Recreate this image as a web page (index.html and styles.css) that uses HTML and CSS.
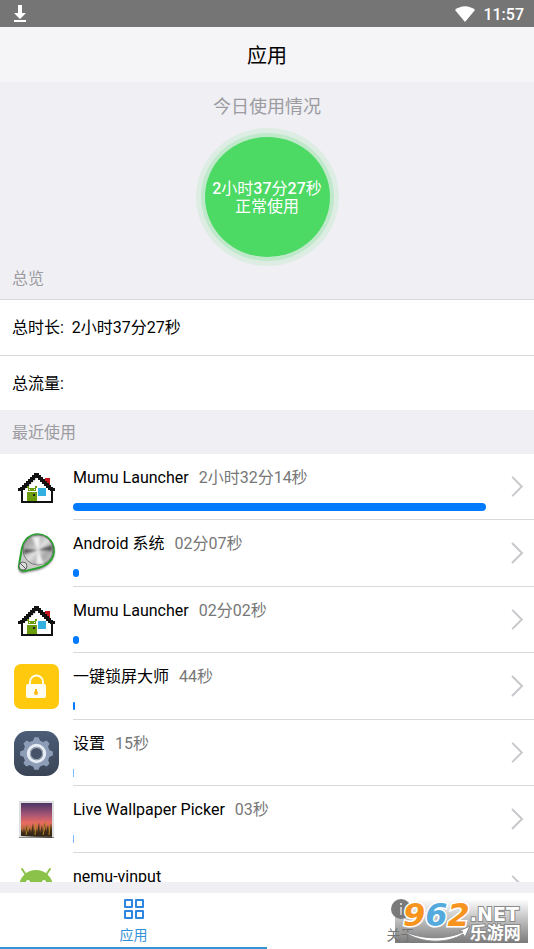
FILE: index.html
```html
<!DOCTYPE html>
<html lang="zh-CN">
<head>
    <meta charset="UTF-8">
    <meta name="viewport" content="width=device-width, initial-scale=1.0">
    <title>应用</title>
    <link rel="stylesheet" href="styles.css">
</head>
<body>
    <!-- shared icons -->
    <svg class="sprite" width="0" height="0" aria-hidden="true">
        <symbol id="chevron" viewBox="0 0 14 24">
            <path d="M2 2l10 10L2 22" fill="none" stroke="#c7c7cc" stroke-width="2"/>
        </symbol>
        <symbol id="house" viewBox="0 0 45 45">
            <path d="M31 13h5v10h-5z" fill="#c8151b"/>
            <path d="M22 10L8 23v14h30V23z" fill="#fff"/>
            <path d="M22 13L10 24" stroke="#c9c9c9" stroke-width="2"/>
            <path d="M8 24v13h30V24" fill="none" stroke="#111" stroke-width="2"/>
            <path d="M20 8h5v2h2v2h2v2h2v2h2v2h2v2h2v2h2v1h2v3h-5v-1h-2v-2h-2v-2h-2v-2h-2v-2h-2v-2h-2v-2h-3v2h-2v2h-2v2h-2v2h-2v2h-2v2H9v1H4v-3h2v-1h2v-2h2v-2h2v-2h2v-2h2v-2h2v-2h2z" fill="#111"/>
            <path d="M13 27h10v9H13zM14 23h8v3h-8zM13 21h2v2h-2zM21 21h2v2h-2z" fill="#6b9c0c"/>
            <path d="M15 24h1v1h-1zM20 24h1v1h-1z" fill="#fff"/>
            <path d="M19 29h2v2h-2z" fill="#222"/>
            <path d="M24 23h8v8h-8z" fill="#33b0df"/>
        </symbol>
    </svg>

    <header class="status-bar">
        <svg class="download" viewBox="0 0 14 18"><path d="M5 0h4v8h4l-6 6-6-6h4zM1 15h12v2H1z" fill="#fff"/></svg>
        <div class="status-right">
            <svg class="wifi" viewBox="0 0 20 16"><path d="M10 16L0 4C6-1 14-1 20 4z" fill="#fff"/></svg>
            <span>11:57</span>
        </div>
    </header>

    <h1 class="title">应用</h1>

    <main class="content">
        <section class="today">
            <h2>今日使用情况</h2>
            <div class="circle">
                <p><b>2</b>小时<b>37</b>分<b>27</b>秒</p>
                <p>正常使用</p>
            </div>
            <h3>总览</h3>
        </section>

        <div class="total">总时长:&nbsp; 2小时37分27秒</div>
        <div class="total">总流量:</div>

        <h3 class="list-title">最近使用</h3>

        <div class="app-list">
            <a class="app" href="#">
                <svg class="icon"><use href="#house"/></svg>
                <div class="info">
                    <p>Mumu Launcher <span>2小时32分14秒</span></p>
                    <div class="track"><div class="bar" style="width: 96.7%"></div></div>
                </div>
                <svg class="chevron"><use href="#chevron"/></svg>
            </a>
            <a class="app" href="#">
                <svg class="icon" viewBox="0 0 45 45">
                    <defs>
                        <linearGradient id="metal" x1="0" y1="0" x2="1" y2="1">
                            <stop offset="0" stop-color="#888"/>
                            <stop offset=".3" stop-color="#b5b5b5"/>
                            <stop offset=".5" stop-color="#ddd"/>
                            <stop offset=".7" stop-color="#aaa"/>
                            <stop offset="1" stop-color="#ccc"/>
                        </linearGradient>
                        <filter id="soft"><feGaussianBlur stdDeviation="1"/></filter>
                    </defs>
                    <path d="M5 36L8 18C11 5 24 1 34 8c10 8 8 22-3 28-6 4-14 4-21 6-4 0-6-2-5-6z" fill="#777" filter="url(#soft)"/>
                    <path d="M5 34L8 17C11 4 23 0 33 6c10 8 9 22-2 28-6 4-14 4-20 6-4 0-7-2-6-6z" fill="#c9cbc9" stroke="#24a52a" stroke-width="2"/>
                    <circle cx="24" cy="19" r="15" fill="url(#metal)" stroke="#777" stroke-width="1"/>
                    <g filter="url(#soft)">
                        <path d="M24 19L10 18v5zM24 19l14-5v6z" fill="#444" opacity=".8"/>
                        <path d="M24 19L18 6h8zM24 19l-2 14h8z" fill="#fff" opacity=".8"/>
                    </g>
                    <circle cx="9" cy="35" r="4" fill="#ddd" stroke="#666"/>
                    <path d="M9 35l-3-3M9 35l3 3" stroke="#555"/>
                </svg>
                <div class="info">
                    <p>Android 系统 <span>02分07秒</span></p>
                    <div class="track"><div class="bar" style="width: 1.34%"></div></div>
                </div>
                <svg class="chevron"><use href="#chevron"/></svg>
            </a>
            <a class="app" href="#">
                <svg class="icon"><use href="#house"/></svg>
                <div class="info">
                    <p>Mumu Launcher <span>02分02秒</span></p>
                    <div class="track"><div class="bar" style="width: 1.29%"></div></div>
                </div>
                <svg class="chevron"><use href="#chevron"/></svg>
            </a>
            <a class="app" href="#">
                <svg class="icon" viewBox="0 0 45 45">
                    <rect width="45" height="45" rx="7" fill="#ffc90e"/>
                    <path d="M16 21v-3a6 6 0 0 1 13 0v3" fill="none" stroke="#fffbe8" stroke-width="2"/>
                    <rect x="12" y="20" width="20" height="14" rx="2" fill="#fffdf2"/>
                    <circle cx="22" cy="29" r="2" fill="#fdb913"/>
                    <path d="M21 25h2v4h-2z" fill="#fdb913"/>
                </svg>
                <div class="info">
                    <p>一键锁屏大师 <span>44秒</span></p>
                    <div class="track"><div class="bar" style="width: 0.47%"></div></div>
                </div>
                <svg class="chevron"><use href="#chevron"/></svg>
            </a>
            <a class="app" href="#">
                <svg class="icon" viewBox="0 0 44 44">
                    <defs>
                        <linearGradient id="slate" x1="0" y1="0" x2="0" y2="1">
                            <stop offset="0" stop-color="#4c5d77"/>
                            <stop offset="1" stop-color="#3a4456"/>
                        </linearGradient>
                    </defs>
                    <rect width="44" height="44" rx="13" fill="url(#slate)"/>
                    <g fill="#8e9db7">
                        <circle cx="22" cy="22" r="13"/>
                        <path id="tooth" d="M18 11l2-5h4l2 5v22l-2 5h-4l-2-5z"/>
                        <use href="#tooth" transform="rotate(45 22 22)"/>
                        <use href="#tooth" transform="rotate(90 22 22)"/>
                        <use href="#tooth" transform="rotate(135 22 22)"/>
                    </g>
                    <circle cx="22" cy="22" r="8" fill="#465268" stroke="#e6edf5" stroke-width="3"/>
                    <circle cx="22" cy="22" r="6" fill="none" stroke="#a2acba" stroke-width="1"/>
                </svg>
                <div class="info">
                    <p>设置 <span>15秒</span></p>
                    <div class="track"><div class="bar tiny" style="width: 0.16%"></div></div>
                </div>
                <svg class="chevron"><use href="#chevron"/></svg>
            </a>
            <a class="app" href="#">
                <svg class="icon" viewBox="0 0 45 45">
                    <defs>
                        <linearGradient id="dusk" x1="0" y1="0" x2="0" y2="1">
                            <stop offset="0" stop-color="#4b3566"/>
                            <stop offset=".35" stop-color="#a55574"/>
                            <stop offset=".6" stop-color="#ea6b62"/>
                            <stop offset=".8" stop-color="#b66b3c"/>
                            <stop offset="1" stop-color="#3c2516"/>
                        </linearGradient>
                    </defs>
                    <rect x="5" y="4" width="35" height="37" fill="#dedede"/>
                    <path d="M5 40h35v1H5z" fill="#888"/>
                    <rect x="7" y="6" width="31" height="33" fill="url(#dusk)"/>
                    <path d="M7 39V32l2 4 1-6 1 7 2-9 1 8 2-5 1 5 2-10 1 9 2-5 1 6 2-11 1 11 2-8 1 8 2-11 1 9 2-6 1 7 2-9 1 7v8z" fill="#2e2414" opacity=".8"/>
                    <path d="M12 38l2-9M21 38l1-12M29 38l3-13M35 38l1-10" stroke="#b88a22"/>
                </svg>
                <div class="info">
                    <p>Live Wallpaper Picker <span>03秒</span></p>
                    <div class="track"><div class="bar tiny" style="width: 0.03%"></div></div>
                </div>
                <svg class="chevron"><use href="#chevron"/></svg>
            </a>
            <a class="app" href="#">
                <svg class="icon" viewBox="0 0 45 45">
                    <path d="M5 23a17 17 0 0 1 34 0z" fill="#8bc34a"/>
                    <path d="M12 11L8 5M32 11l4-6" stroke="#8bc34a" stroke-width="2" stroke-linecap="round"/>
                    <circle cx="14" cy="18" r="2" fill="#fff"/>
                    <circle cx="30" cy="18" r="2" fill="#fff"/>
                </svg>
                <div class="info">
                    <p>nemu-vinput</p>
                </div>
                <svg class="chevron"><use href="#chevron"/></svg>
            </a>
        </div>
    </main>

    <nav class="tabs">
        <button class="tab active">
            <svg viewBox="0 0 20 20"><path d="M1 1h7v7H1zM12 1h7v7h-7zM1 12h7v7H1zM12 12h7v7h-7z" fill="none" stroke="#2f86e0" stroke-width="2" stroke-linejoin="round"/></svg>
            <span>应用</span>
        </button>
        <button class="tab">
            <svg viewBox="0 0 20 20"><circle cx="10" cy="10" r="10" fill="#7b7b7b"/><path d="M9 4h2v2H9zM9 8h2v8H9z" fill="#ddd"/></svg>
            <span>关于</span>
        </button>
        <div class="watermark">
            <svg class="swoosh" viewBox="0 0 133 44"><path d="M7 31c18 10 44 10 61 2l-4-1 11-5-5 11-2-3C51 46 22 44 7 31z" fill="#fff" stroke="#888" stroke-width="1"/></svg>
            <div class="number">9<span>6</span>2</div>
            <div class="site">
                <b>.NET</b>
                <b class="name">乐游网</b>
            </div>
        </div>
    </nav>
</body>
</html>
```

FILE: styles.css
```css
* {
    margin: 0;
    padding: 0;
    box-sizing: border-box;
}

body {
    display: flex;
    flex-direction: column;
    height: 100vh;
    overflow: hidden;
    background: #efeff4;
    color: #000;
    font-family: Roboto, 'Noto Sans CJK SC', sans-serif;
    font-size: 16px;
    line-height: 20px;
}

.sprite {
    position: absolute;
}

.status-bar {
    display: flex;
    justify-content: space-between;
    align-items: center;
    flex: none;
    height: 27px;
    padding: 0 10px 0 13px;
    background: #757575;
    color: #fff;
    font-size: 16px;
    font-weight: 500;
}

.status-right {
    display: flex;
    align-items: center;
    gap: 8px;
}

.status-right span {
    padding-top: 2px;
}

.download {
    width: 14px;
    height: 18px;
}

.wifi {
    width: 20px;
    height: 16px;
}

.title {
    flex: none;
    height: 55px;
    background: #f5f5f7;
    font-size: 20px;
    font-weight: 400;
    line-height: 58px;
    text-align: center;
}

.content {
    flex: 1;
    min-height: 0;
    margin-bottom: 11px;
    overflow: hidden;
}

h2,
h3 {
    color: #9b9ba0;
    font-size: 16px;
    font-weight: 400;
}

.today {
    padding-top: 15px;
    border-bottom: 1px solid #d9d9db;
}

.today h2 {
    font-size: 18px;
    text-align: center;
}

.today h3 {
    padding: 12px 12px 10px;
}

.circle {
    display: flex;
    flex-direction: column;
    align-items: center;
    justify-content: center;
    width: 125px;
    height: 120px;
    margin: 20px auto 0;
    padding-top: 2px;
    border-radius: 50%;
    background: #4cd964;
    box-shadow: 0 0 0 4px #c0e9cc, 0 0 0 9px #deede4;
    color: #fff;
    line-height: 18px;
    white-space: nowrap;
}

.circle b {
    font-weight: 500;
}

.total {
    height: 55px;
    padding: 0 12px;
    background: #fff;
    line-height: 56px;
}

.total + .total {
    border-top: 1px solid #d9d9db;
}

.list-title {
    height: 44px;
    padding: 0 12px;
    line-height: 46px;
}

.app-list {
    background: #fff;
}

.app {
    display: flex;
    align-items: center;
    height: 66px;
    padding-left: 14px;
    color: #000;
    text-decoration: none;
}

.app:nth-child(even) {
    height: 67px;
}

.icon {
    flex: none;
    width: 45px;
    height: 45px;
    margin-right: 14px;
}

.info {
    flex: 1;
    height: 100%;
    padding-top: 14px;
    border-bottom: 1px solid #d9d9db;
}

.info span {
    margin-left: 6px;
    color: #777;
}

.track {
    height: 8px;
    margin-top: 15px;
}

.bar {
    height: 8px;
    min-width: 1px;
    border-radius: 4px;
    background: #007aff;
}

.bar.tiny {
    border-radius: 0;
    opacity: 0.5;
}

.chevron {
    flex: none;
    width: 34px;
    height: 100%;
    padding: 21px 10px;
    border-bottom: 1px solid #d9d9db;
}

.tabs {
    position: relative;
    display: flex;
    flex: none;
    height: 56px;
    background: #fff;
}

.tab {
    display: flex;
    flex: 1;
    flex-direction: column;
    align-items: center;
    gap: 6px;
    padding-top: 6px;
    border: none;
    border-bottom: 2px solid transparent;
    background: none;
    color: #777;
    font: inherit;
    font-size: 14px;
    line-height: 20px;
    cursor: pointer;
}

.tab svg {
    width: 20px;
    height: 20px;
}

.tab.active {
    border-color: #3492d6;
    color: #3492d6;
}

/* site badge over the right tab */
.watermark {
    position: absolute;
    right: 6px;
    bottom: 6px;
    display: flex;
    width: 133px;
    height: 44px;
    padding-left: 8px;
    background: linear-gradient(rgba(255, 255, 255, 0), rgba(115, 115, 115, 0.95));
    font-family: 'DejaVu Sans', 'Noto Sans CJK SC', sans-serif;
}

.swoosh {
    position: absolute;
    left: 0;
    top: 0;
    width: 133px;
    height: 44px;
}

.number {
    color: #f7941d;
    font-size: 32px;
    font-style: italic;
    font-weight: 700;
    line-height: 32px;
    -webkit-text-stroke: 3px #fff;
    paint-order: stroke fill;
}

.number span {
    color: #55aadd;
}

.site {
    display: flex;
    flex-direction: column;
    color: #fff;
    font-size: 19px;
    line-height: 18px;
    padding-top: 6px;
    -webkit-text-stroke: 2px #8a8a8a;
    paint-order: stroke fill;
}

.site .name {
    font-size: 17px;
    line-height: 20px;
}
```
